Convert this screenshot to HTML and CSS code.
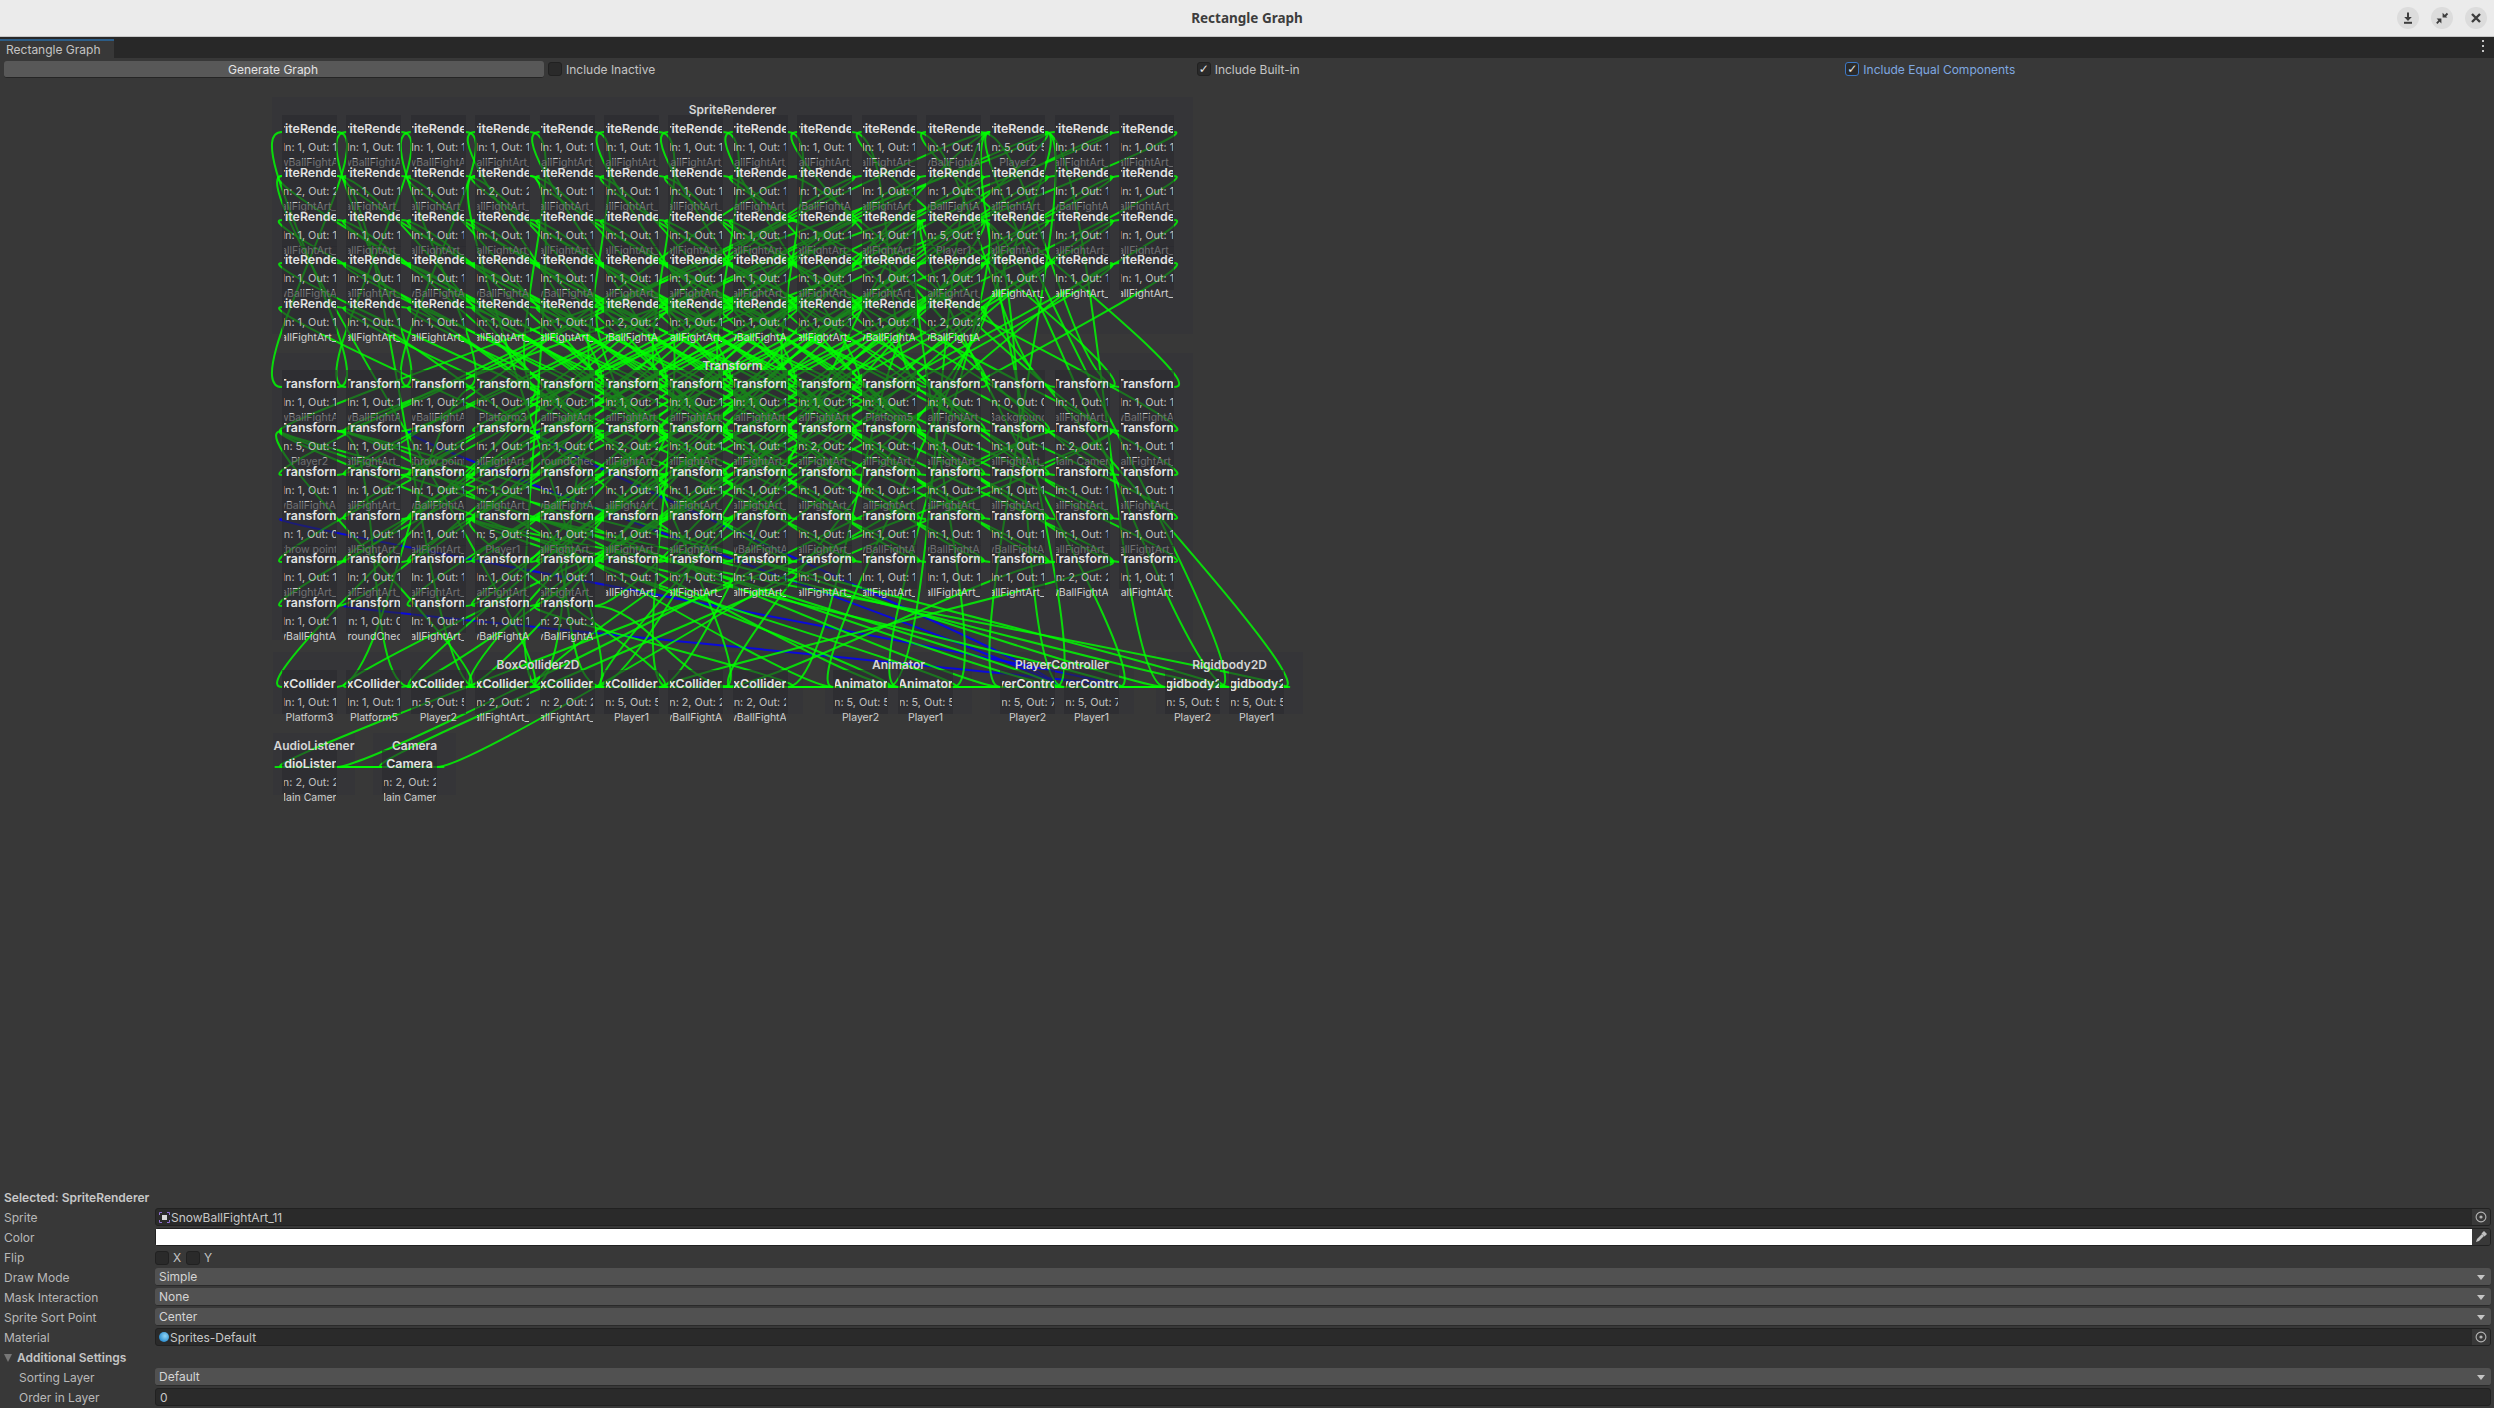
FILE: index.html
```html
<!DOCTYPE html>
<html lang="en">
<head>
<meta charset="utf-8">
<title>Rectangle Graph</title>
<link rel="stylesheet" href="styles.css">
</head>
<body>
<div class="app">
  <header class="titlebar">
    <div class="title">Rectangle Graph</div>
    <div class="winbtns">
      <span class="winbtn"><svg viewBox="0 0 14 14" width="14" height="14"><path d="M6 1.5h2v4.5h2.8L7 10 3.2 6H6z" fill="#3d3d3d"/><rect x="3" y="10.8" width="8" height="2" fill="#3d3d3d"/></svg></span>
      <span class="winbtn"><svg viewBox="0 0 14 14" width="14" height="14"><path d="M12.5 2.5 9.5 5.5M1.8 12.4 4.8 9.2" stroke="#3d3d3d" stroke-width="1.8"/><path d="M7.6 1.8v4.8h4.8zM1.6 7.6h4.8v4.8z" fill="#3d3d3d"/></svg></span>
      <span class="winbtn"><svg viewBox="0 0 14 14" width="14" height="14"><path d="M3 3l8 8M11 3l-8 8" stroke="#3d3d3d" stroke-width="2.4"/></svg></span>
    </div>
  </header>
  <div class="tabstrip">
    <div class="tab">Rectangle Graph</div>
    <div class="menu-dots"><i></i><i></i><i></i></div>
  </div>
  <div class="toolbar">
    <button class="genbtn">Generate Graph</button>
    <label class="toggle"><span class="check"></span>Include Inactive</label>
    <label class="toggle"><span class="check">&#10003;</span>Include Built-in</label>
    <label class="toggle toggle-on"><span class="check">&#10003;</span>Include Equal Components</label>
  </div>
  <main class="canvas" id="canvas"></main>
  <section class="inspector">
    <div class="selected">Selected: SpriteRenderer</div>
    <div class="row"><div class="label">Sprite</div>
      <div class="field objfield">
        <svg class="objicon" viewBox="0 0 11 11" width="11" height="11"><path d="M.5 3V.5H3M8 .5h2.5V3M10.5 8v2.5H8M3 10.5H.5V8" fill="none" stroke="#8f6fd0"/><rect x="3" y="3" width="5" height="5" fill="#d8d8d8"/></svg>
        <span>SnowBallFightArt_11</span>
        <span class="picker"><svg viewBox="0 0 12 12" width="12" height="12"><circle cx="6" cy="6" r="4.9" fill="none" stroke="#b4b4b4" stroke-width="1.1"/><circle cx="6" cy="6" r="1.6" fill="#b4b4b4"/></svg></span>
      </div>
    </div>
    <div class="row"><div class="label">Color</div>
      <div class="colorfield"><div class="swatch"></div>
        <span class="picker"><svg viewBox="0 0 12 12" width="12" height="12"><path d="M1 11l1-3 5-5 2 2-5 5z" fill="#c0c0c0"/><path d="M6.5 2.5 9 0l3 3-2.500 2.500z" fill="#c0c0c0"/></svg></span>
      </div>
    </div>
    <div class="row"><div class="label">Flip</div>
      <div class="flips"><span class="check"></span><span class="fliplabel">X</span><span class="check"></span><span class="fliplabel">Y</span></div>
    </div>
    <div class="row"><div class="label">Draw Mode</div><div class="field dropdown">Simple</div></div>
    <div class="row"><div class="label">Mask Interaction</div><div class="field dropdown">None</div></div>
    <div class="row"><div class="label">Sprite Sort Point</div><div class="field dropdown">Center</div></div>
    <div class="row"><div class="label">Material</div>
      <div class="field objfield">
        <span class="sphere"></span>
        <span>Sprites-Default</span>
        <span class="picker"><svg viewBox="0 0 12 12" width="12" height="12"><circle cx="6" cy="6" r="4.9" fill="none" stroke="#b4b4b4" stroke-width="1.1"/><circle cx="6" cy="6" r="1.6" fill="#b4b4b4"/></svg></span>
      </div>
    </div>
    <div class="row"><div class="label section"><span class="fold"></span>Additional Settings</div></div>
    <div class="row"><div class="label sub">Sorting Layer</div><div class="field dropdown">Default</div></div>
    <div class="row"><div class="label sub">Order in Layer</div><div class="field numfield">0</div></div>
  </section>
</div>
<script src="graph.js"></script>
</body>
</html>
```
FILE: styles.css
```css
* { box-sizing: border-box; }
html, body { margin: 0; height: 100%; overflow: hidden; }
body { font-family: Inter, "Liberation Sans", sans-serif; font-size: 12px; color: #c4c4c4; background: #383838; }
.app { display: flex; flex-direction: column; height: 1408px; }

.titlebar { height: 37px; flex: none; background: #ebebeb; border-bottom: 1px solid #c6c6c6; position: relative; display: flex; align-items: center; justify-content: center; }
.title { font-family: "Noto Sans", sans-serif; font-weight: 700; font-size: 13.5px; color: #3d3d3d; }
.winbtns { position: absolute; right: 7px; top: 7px; display: flex; gap: 12px; }
.winbtn { width: 22px; height: 22px; border-radius: 50%; background: #dcdcdc; display: flex; align-items: center; justify-content: center; }

.tabstrip { height: 21px; flex: none; background: #282828; display: flex; align-items: flex-end; justify-content: space-between; }
.tab { width: 114px; height: 19px; background: #383838; border-top: 2px solid #2c5d87; padding-left: 6px; line-height: 17px; color: #c4c4c4; }
.menu-dots { display: flex; flex-direction: column; gap: 2px; margin: 0 10px 5px 0; }
.menu-dots i { display: block; width: 2px; height: 2px; background: #c4c4c4; margin-bottom: 1px; }

.toolbar { height: 24px; flex: none; display: flex; gap: 4px; padding: 3px 4px 0; background: #383838; }
.genbtn { flex: 0 0 540px; height: 17px; padding: 0 2px 0 0; border: 0; border-bottom: 1px solid #252525; border-radius: 3px; background: #585858; color: #e4e4e4; font: 12px Inter, sans-serif; }
.toggle { flex: 1; display: flex; align-items: flex-start; gap: 4px; line-height: 17px; color: #c4c4c4; }
.check { flex: none; width: 14px; height: 14px; margin-top: 1px; border: 1px solid #212121; border-radius: 3px; background: #2a2a2a; color: #e6e6e6; font: 12px/12px "DejaVu Sans", sans-serif; text-align: center; }
.toggle-on { color: #7fa8e0; }
.toggle-on .check { border-color: #3d78c4; }

.canvas { flex: 1; position: relative; min-height: 0; }
.edges { position: absolute; left: 0; top: 0; width: 100%; height: 100%; }
.edges path { fill: none; stroke-width: 2; stroke-opacity: .82; }
.edge-green { stroke: #00ff00; }
.edge-blue { stroke: #0000ff; }

.group { position: absolute; background: rgba(46, 48, 56, .3); }
.group-title { position: absolute; left: 0; right: 0; top: 4px; display: flex; justify-content: center; white-space: nowrap; line-height: 18px; font-weight: 600; color: #d6d6d6; z-index: 2; }
.node { position: absolute; width: 55px; height: 44px; padding: 5px 1.500px 0; background: rgba(42, 42, 46, .58); }
.node > div { height: 18px; line-height: 18px; display: flex; justify-content: center; overflow: hidden; white-space: nowrap; }
.node-title { font-weight: 600; font-size: 12.4px; color: #e2e2e2; }
.node-stat { margin-top: 1px; font-size: 10.8px; color: #c0c0c0; }
.node-name { margin-top: -3px; font-size: 10.5px; color: #d0d0d0; }

.inspector { flex: none; height: 220px; }
.selected { height: 20px; padding-left: 4px; font-weight: 600; line-height: 20px; color: #c8c8c8; }
.row { height: 20px; display: flex; padding-right: 3px; }
.label { flex: 0 0 155px; padding-left: 4px; line-height: 20px; color: #b8b8b8; }
.label.sub { padding-left: 19px; }
.label.section { flex: 1; display: flex; align-items: center; font-weight: 600; color: #c4c4c4; }
.fold { width: 0; height: 0; margin-right: 5px; border: 4.500px solid transparent; border-top: 8px solid #777; border-bottom: 0; }
.field { position: relative; flex: 1; height: 18px; line-height: 17px; padding-left: 4px; border-radius: 3px; display: flex; align-items: center; }
.objfield, .numfield { background: #2a2a2a; border: 1px solid #212121; color: #c8c8c8; }
.objfield { gap: 1px; padding-left: 3px; }
.objicon { flex: none; }
.sphere { flex: none; width: 10px; height: 10px; border-radius: 50%; background: radial-gradient(circle at 60% 40%, #8fd4f5, #2f8fd0 70%); }
.picker { position: absolute; right: 0; top: 0; bottom: 0; width: 18px; background: #383838; border-radius: 0 2px 2px 0; display: flex; align-items: center; justify-content: center; }
.dropdown { background: #515151; border-bottom: 1px solid #2a2a2a; color: #d4d4d4; }
.dropdown::after { content: ""; position: absolute; right: 6px; top: 7px; border: 4px solid transparent; border-top: 5px solid #c4c4c4; border-bottom: 0; }
.colorfield { position: relative; flex: 1; height: 18px; border: 1px solid #212121; border-radius: 3px; background: #383838; }
.swatch { height: 16px; margin-right: 17px; background: #fff; }
.flips { flex: 1; display: flex; align-items: flex-start; }
.flips .check { margin-top: 3px; }
.fliplabel { width: 17px; padding-left: 4px; line-height: 20px; }
```
FILE: graph.js
```js
// Rectangle graph: components grouped by type, linked when they share a GameObject.
var ORIGIN_Y = 82, COL = 64.4, LEFT = 282, NODE_W = 55, TAN = 50;

var TF = [
  'w','w','w','Platform3','a','a','a','a','a','Platform5','a','Background','a','w',
  'Player2','a','throw point','a','GroundCheck','a','a','a','a','a','a','a','Main Camera','a',
  'w','a','w','a','w','a','a','a','a','a','a','a','a','a',
  'throw point','a','a','Player1','a','a','a','w','a','w','w','w','a','a',
  'a','a','a','a','a','a','a','a','a','a','a','a','w','a',
  'w','GroundCheck','a','w','w'
];
var NO_SPRITE = [3, 9, 11, 16, 18, 26, 42, 71];
var OUT_ZERO = [16, 18, 42, 71];
var TWO_LINKS = [19, 22, 26, 68, 74];
var SPRITE_ROWS = [129, 173, 217, 260, 304];
var TF_ROWS = [384, 428, 472, 516, 559, 603];

var canvas = document.getElementById('canvas');
var counter = 0;
function fullName(tag) {
  if (tag === 'w') { counter++; return 'SnowBallFightArt_' + (10 + counter); }
  if (tag === 'a') { counter++; return 'SnowBallFightArt_' + (10 + counter) + ' (' + (10 + counter) + ')'; }
  return tag;
}
var tfNames = TF.map(fullName);

function el(cls, text) {
  var d = document.createElement('div');
  d.className = cls;
  if (text !== undefined) {
    var s = document.createElement('span');
    s.textContent = text;
    s.style.flex = 'none';
    d.appendChild(s);
  }
  return d;
}
function makeNode(title, links, out, name, x, y) {
  return { title: title, stat: 'In: ' + links + ', Out: ' + out, name: name, x: x, y: y };
}
function gridPos(i, rows) {
  return { x: LEFT + (i % 14) * COL, y: rows[Math.floor(i / 14)] };
}

var tfNodes = tfNames.map(function (name, i) {
  var p = gridPos(i, TF_ROWS), n = 1, out = 1;
  if (TWO_LINKS.indexOf(i) >= 0) { n = 2; out = 2; }
  if (i === 14 || i === 45) { n = 5; out = 5; }
  if (OUT_ZERO.indexOf(i) >= 0) { out = 0; }
  if (i === 11) { n = 0; out = 0; }
  return makeNode('Transform', n, out, name, p.x, p.y);
});

var spriteNodes = [], spriteOf = {};
tfNames.forEach(function (name, i) {
  if (NO_SPRITE.indexOf(i) >= 0) return;
  var idx = spriteNodes.length, p = gridPos(idx, SPRITE_ROWS);
  var n = tfNodes[i].stat.slice(0, 5) === 'In: 5' ? 5 : (i === 19 || i === 22 || i === 68 || i === 74) ? 2 : 1;
  spriteNodes.push(makeNode('SpriteRenderer', n, n, name, p.x, p.y));
  spriteOf[i] = spriteNodes[idx];
});

function bottomNode(title, n, out, name, x) { return makeNode(title, n, out, name, x, 684); }
var box = [
  ['Platform3', 1], ['Platform5', 1], ['Player2', 5], [tfNames[19], 2],
  [tfNames[22], 2], ['Player1', 5], [tfNames[68], 2], [tfNames[74], 2]
].map(function (b, i) { return bottomNode('BoxCollider2D', b[1], b[1], b[0], LEFT + i * COL); });
var anim = [bottomNode('Animator', 5, 5, 'Player2', 833), bottomNode('Animator', 5, 5, 'Player1', 898)];
var pc = [bottomNode('PlayerController', 5, 7, 'Player2', 1000), bottomNode('PlayerController', 5, 7, 'Player1', 1064)];
var rb = [bottomNode('Rigidbody2D', 5, 5, 'Player2', 1165), bottomNode('Rigidbody2D', 5, 5, 'Player1', 1229)];
var audio = makeNode('AudioListener', 2, 2, 'Main Camera', 282, 764);
var camera = makeNode('Camera', 2, 2, 'Main Camera', 382, 764);

var groups = [
  ['SpriteRenderer', 272, 97, 921, 237, spriteNodes],
  ['Transform', 272, 353, 921, 287, tfNodes],
  ['BoxCollider2D', 273, 652, 530, 62, box],
  ['Animator', 825, 652, 147, 62, anim],
  ['PlayerController', 990, 652, 144, 62, pc],
  ['Rigidbody2D', 1156, 652, 147, 62, rb],
  ['AudioListener', 273, 733, 82, 62, [audio]],
  ['Camera', 373, 733, 83, 62, [camera]]
];

var greens = [], blues = [];
function curve(from, to) {
  var ay = from.y + 3, by = to.y + 3, ax = from.x, bx = to.x + NODE_W;
  return 'M' + ax + ' ' + (ay - ORIGIN_Y) + 'C' + (ax - TAN) + ' ' + (ay - ORIGIN_Y) + ' ' +
    (bx + TAN) + ' ' + (by - ORIGIN_Y) + ' ' + bx + ' ' + (by - ORIGIN_Y);
}
function link(a, b) { greens.push(curve(a, b)); greens.push(curve(b, a)); }
function clique(list) {
  for (var i = 0; i < list.length; i++) for (var j = i + 1; j < list.length; j++) link(list[i], list[j]);
}
Object.keys(spriteOf).forEach(function (i) {
  if (+i !== 14 && +i !== 45) link(spriteOf[i], tfNodes[i]);
});
clique([tfNodes[14], spriteOf[14], box[2], anim[0], pc[0], rb[0]]);
clique([tfNodes[45], spriteOf[45], box[5], anim[1], pc[1], rb[1]]);
link(tfNodes[3], box[0]);
link(tfNodes[9], box[1]);
link(spriteOf[19], box[3]); link(tfNodes[19], box[3]);
link(spriteOf[22], box[4]); link(tfNodes[22], box[4]);
link(spriteOf[68], box[6]); link(tfNodes[68], box[6]);
link(spriteOf[74], box[7]); link(tfNodes[74], box[7]);
clique([tfNodes[26], audio, camera]);
blues.push(curve(tfNodes[16], pc[0]), curve(tfNodes[18], pc[0]), curve(tfNodes[42], pc[1]), curve(tfNodes[71], pc[1]));

groups.forEach(function (g) {
  var d = el('group');
  d.style.cssText = 'left:' + g[1] + 'px;top:' + (g[2] - ORIGIN_Y) + 'px;width:' + g[3] + 'px;height:' + g[4] + 'px';
  d.appendChild(el('group-title', g[0]));
  canvas.appendChild(d);
});

var NS = 'http://www.w3.org/2000/svg';
var svg = document.createElementNS(NS, 'svg');
svg.setAttribute('class', 'edges');
function addPaths(list, cls) {
  list.forEach(function (dStr) {
    var p = document.createElementNS(NS, 'path');
    p.setAttribute('d', dStr);
    p.setAttribute('class', cls);
    svg.appendChild(p);
  });
}
addPaths(blues, 'edge-blue');
addPaths(greens, 'edge-green');
canvas.appendChild(svg);

groups.forEach(function (g) {
  g[5].forEach(function (n) {
    var d = el('node');
    d.style.left = n.x + 'px';
    d.style.top = (n.y - 14 - ORIGIN_Y) + 'px';
    d.appendChild(el('node-title', n.title));
    d.appendChild(el('node-stat', n.stat));
    d.appendChild(el('node-name', n.name));
    canvas.appendChild(d);
  });
});
```
